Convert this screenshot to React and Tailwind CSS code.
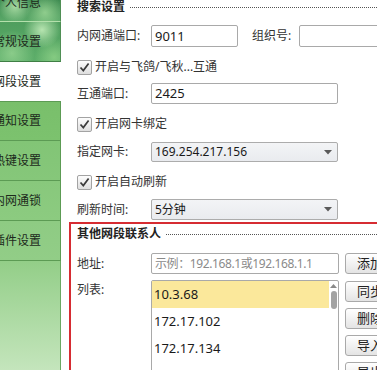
import React from "react";

function Check({ label }) {
  return (
    <div className="flex items-center h-[20px]">
      <span className="w-[15px] h-[15px] border border-[#a3a3a3] rounded-[2px] bg-linear-to-b from-[#fdfdfd] to-[#dedede] flex items-center justify-center shrink-0">
        <svg width="11" height="11" viewBox="0 0 11 11">
          <path d="M1.5 5.5 L4.3 8.6 L9.6 1.6" stroke="#3a3a3a" strokeWidth="1.7" fill="none" />
        </svg>
      </span>
      <span className="ml-[3px] text-[12px] text-[#333] whitespace-nowrap">{label}</span>
    </div>
  );
}

function Label({ children }) {
  return <span className="w-[74px] shrink-0 text-[12px] text-[#333] whitespace-nowrap">{children}</span>;
}

function Select({ value }) {
  return (
    <div className="w-[187px] shrink-0 h-full border border-[#acacac] rounded-[2px] bg-linear-to-b from-[#f3f4f6] to-[#e9ebef] flex items-center pl-[3px] pr-[5px] text-[12px] text-[#1a1a1a]">
      <span className="flex-1">{value}</span>
      <svg width="8" height="5" viewBox="0 0 8 5">
        <path d="M0 0 L8 0 L4 4.5 Z" fill="#5a5a5a" />
      </svg>
    </div>
  );
}

function Btn({ children }) {
  return (
    <div className="w-[60px] h-[21px] border border-[#a9a9a9] rounded-[3px] bg-linear-to-b from-white to-[#e4e4e4] flex items-center pl-[11px] text-[13px] text-[#222] shrink-0 whitespace-nowrap">
      {children}
    </div>
  );
}

function SideItem({ children, h, cls }) {
  return (
    <div className={h + " " + cls + " flex items-center overflow-hidden whitespace-nowrap text-[12px] text-[#1d2a1c]"}>
      <span className="ml-[-7px]">{children}</span>
    </div>
  );
}

export default function App() {
  return (
    <div className="w-[377px] h-[370px] overflow-hidden bg-white flex font-['Noto_Sans','Noto_Sans_CJK_SC',sans-serif] leading-none">
      {/* sidebar */}
      <div className="w-[61px] shrink-0 flex flex-col">
        <div className="h-[22px] border-r border-[#4f8f55] border-b border-b-[#b4e0ac] bg-[image:radial-gradient(circle_at_25%_30%,rgba(190,235,180,0.8),transparent_35%),radial-gradient(circle_at_75%_60%,rgba(170,225,160,0.7),transparent_40%),linear-gradient(#3f8c52,#5aa868)] flex items-end overflow-hidden whitespace-nowrap text-[12px] text-[#1d2a1c] pb-[12px]">
          <span className="ml-[-7px]">个人信息</span>
        </div>
        <SideItem h="h-[40px]" cls="border-r border-[#4f8f55] border-b border-b-[#3f7f45] bg-[image:radial-gradient(circle_at_70%_20%,rgba(200,240,190,0.85),transparent_35%),radial-gradient(circle_at_20%_80%,rgba(170,225,160,0.6),transparent_40%),radial-gradient(circle_at_90%_90%,rgba(150,215,140,0.7),transparent_30%),linear-gradient(#4f9e5e,#5dae6a)]">
          常规设置
        </SideItem>
        <SideItem h="h-[39px]" cls="bg-white">网段设置</SideItem>
        <SideItem h="h-[40px]" cls="border-r border-[#5a9a52] border-t border-[#5c9b54] border-b border-b-[#5c9b54] bg-linear-to-b from-[#79bf6b] to-[#7cc26e]">
          通知设置
        </SideItem>
        <SideItem h="h-[40px]" cls="border-r border-[#5a9a52] border-b border-[#5c9b54] bg-linear-to-b from-[#82c576] to-[#86c77a]">
          热键设置
        </SideItem>
        <SideItem h="h-[40px]" cls="border-r border-[#5a9a52] border-b border-[#5c9b54] bg-linear-to-b from-[#88c87c] to-[#8ccb80]">
          内网通锁
        </SideItem>
        <SideItem h="h-[40px]" cls="border-r border-[#5a9a52] border-b border-[#5c9b54] bg-linear-to-b from-[#8ecb83] to-[#92cd87]">
          插件设置
        </SideItem>
        <div className="flex-1 border-r border-[#6aa862] bg-linear-to-b from-[#93ce88] to-[#c4e5bc]" />
      </div>

      {/* main */}
      <div className="w-[360px] shrink-0 ml-[8px] flex flex-col">
        <div className="pl-[8px] flex flex-col">
          <div className="h-[14px] flex items-center">
            <span className="text-[12px] font-bold text-[#222]">搜索设置</span>
            <div className="flex-1 ml-[5px] border-t border-dotted border-[#555]" />
          </div>

          <div className="mt-[11px] h-[22px] flex items-center">
            <Label>内网通端口:</Label>
            <div className="w-[87px] shrink-0 h-full border border-[#a9a9a9] rounded-[2px] flex items-center pl-[3px] text-[13px] text-[#1a1a1a]">9011</div>
            <span className="ml-[14px] w-[47px] shrink-0 text-[12px] text-[#333] whitespace-nowrap">组织号:</span>
            <div className="w-[100px] shrink-0 h-full border border-[#a9a9a9] rounded-[2px]" />
          </div>

          <div className="mt-[10px]"><Check label="开启与飞鸽/飞秋...互通" /></div>

          <div className="mt-[6px] h-[21px] flex items-center">
            <Label>互通端口:</Label>
            <div className="w-[187px] shrink-0 h-full border border-[#a9a9a9] rounded-[2px] flex items-center pl-[3px] text-[13px] text-[#1a1a1a]">2425</div>
          </div>

          <div className="mt-[10px]"><Check label="开启网卡绑定" /></div>

          <div className="mt-[8px] h-[20px] flex items-center">
            <Label>指定网卡:</Label>
            <Select value="169.254.217.156" />
          </div>

          <div className="mt-[10px]"><Check label="开启自动刷新" /></div>

          <div className="mt-[7px] h-[21px] flex items-center">
            <Label>刷新时间:</Label>
            <Select value="5分钟" />
          </div>
        </div>

        {/* red box */}
        <div className="mt-[2px] flex-1 border-l-2 border-t-2 border-[#d62c32] pl-[6px] flex flex-col">
          <div className="mt-[3px] h-[14px] flex items-center">
            <span className="text-[12px] font-bold text-[#222] whitespace-nowrap">其他网段联系人</span>
            <div className="flex-1 ml-[5px] border-t border-dotted border-[#555]" />
          </div>

          <div className="mt-[12px] h-[21px] flex items-center">
            <Label>地址:</Label>
            <div className="w-[188px] shrink-0 h-full border border-[#a9a9a9] rounded-[2px] flex items-center pl-[3px] text-[12px] tracking-[-0.4px] text-[#8a8a8a] whitespace-nowrap overflow-hidden">示例：192.168.1或192.168.1.1</div>
            <div className="ml-[6px] shrink-0"><Btn>添加</Btn></div>
          </div>

          <div className="mt-[6px] flex items-start">
            <span className="w-[74px] shrink-0 text-[12px] text-[#333] mt-[4px]">列表:</span>
            <div className="w-[188px] shrink-0 h-[110px] border border-[#a9a9a9] rounded-t-[2px] flex">
              <div className="flex-1 flex flex-col text-[13px] text-[#1a1a1a]">
                <div className="h-[27px] bg-[#fbe89b] flex items-center pl-[2px]">10.3.68</div>
                <div className="h-[27px] flex items-center pl-[2px]">172.17.102</div>
                <div className="h-[27px] flex items-center pl-[2px]">172.17.134</div>
                <div className="h-[27px] flex items-center pl-[2px]">172.17.150</div>
              </div>
              <div className="w-[9px] flex flex-col items-center pt-[3px]">
                <svg width="7" height="4" viewBox="0 0 7 4">
                  <path d="M0 4 L3.5 0 L7 4 Z" fill="#8a8a8a" />
                </svg>
                <div className="mt-[3px] w-[6px] h-[18px] rounded-[3px] bg-[#a3a3a3]" />
              </div>
            </div>
            <div className="ml-[6px] flex flex-col gap-[6px] mt-[1px] shrink-0">
              <Btn>同步</Btn>
              <Btn>删除</Btn>
              <Btn>导入</Btn>
              <Btn>导出</Btn>
            </div>
          </div>
        </div>
      </div>
    </div>
  );
}
